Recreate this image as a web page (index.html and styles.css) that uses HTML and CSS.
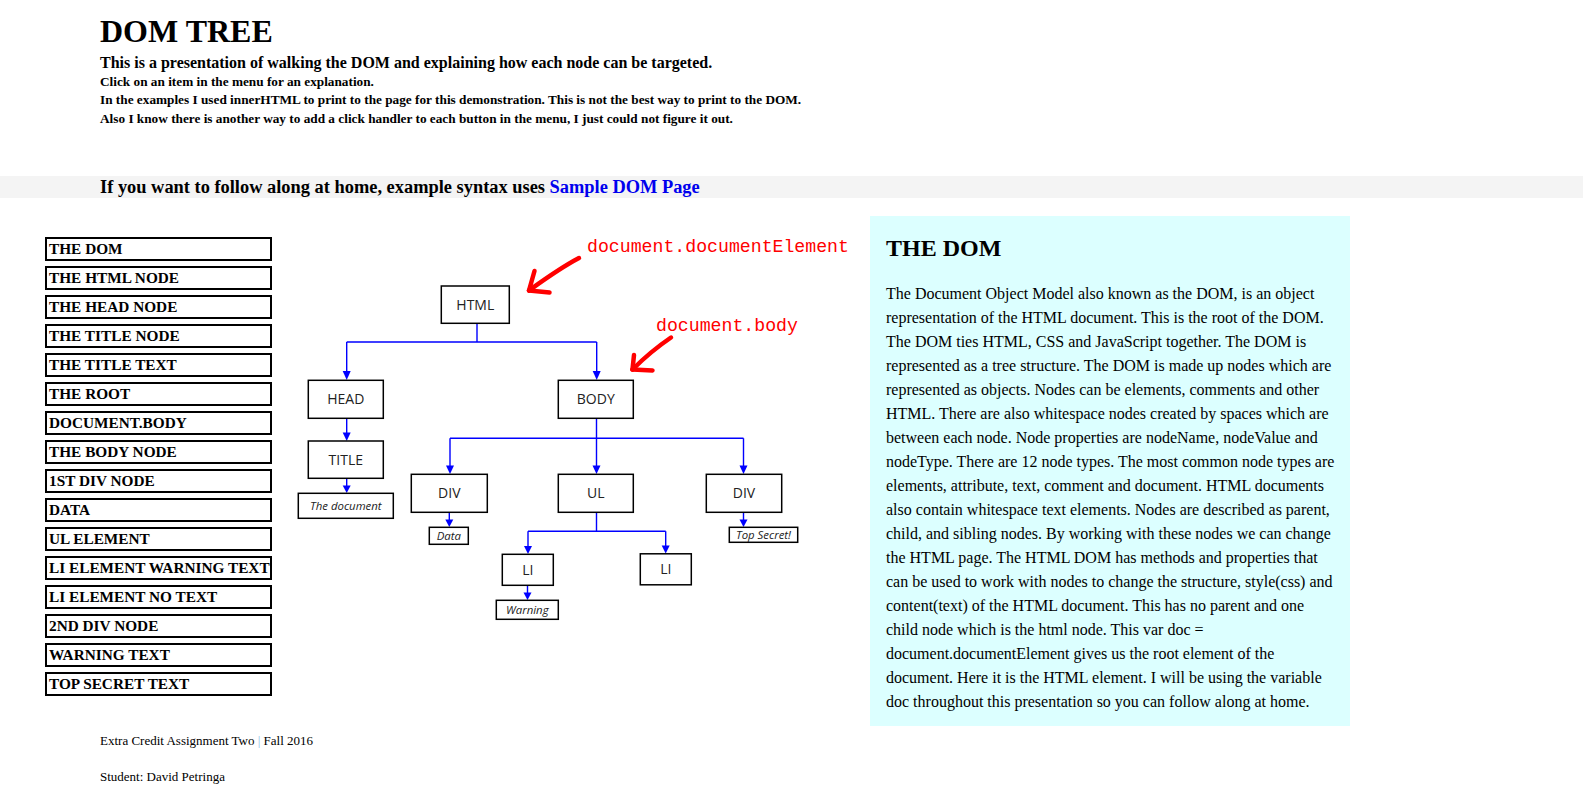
FILE: index.html
```html
<!DOCTYPE html>
<html lang="en">
<head>
<meta charset="utf-8">
<title>DOM Tree</title>
<link rel="stylesheet" href="styles.css">
</head>
<body>
<header class="intro">
  <h1 class="title">DOM TREE</h1>
  <p class="lead">This is a presentation of walking the DOM and explaining how each node can be targeted.</p>
  <p class="note">Click on an item in the menu for an explanation.</p>
  <p class="note">In the examples I used innerHTML to print to the page for this demonstration. This is not the best way to print to the DOM.</p>
  <p class="note">Also I know there is another way to add a click handler to each button in the menu, I just could not figure it out.</p>
</header>
<h3 class="follow">If you want to follow along at home, example syntax uses <a class="sample-link" href="#">Sample DOM Page</a></h3>
<main class="content">
  <nav class="menu">
    <button class="menu-item">THE DOM</button>
    <button class="menu-item">THE HTML NODE</button>
    <button class="menu-item">THE HEAD NODE</button>
    <button class="menu-item">THE TITLE NODE</button>
    <button class="menu-item">THE TITLE TEXT</button>
    <button class="menu-item">THE ROOT</button>
    <button class="menu-item">DOCUMENT.BODY</button>
    <button class="menu-item">THE BODY NODE</button>
    <button class="menu-item">1ST DIV NODE</button>
    <button class="menu-item">DATA</button>
    <button class="menu-item">UL ELEMENT</button>
    <button class="menu-item">LI ELEMENT WARNING TEXT</button>
    <button class="menu-item">LI ELEMENT NO TEXT</button>
    <button class="menu-item">2ND DIV NODE</button>
    <button class="menu-item">WARNING TEXT</button>
    <button class="menu-item">TOP SECRET TEXT</button>
  </nav>
  <svg class="diagram" width="580" height="420" viewBox="290 216 580 420" xmlns="http://www.w3.org/2000/svg">
    <defs>
      <filter id="soft" x="-20%" y="-20%" width="140%" height="140%">
        <feGaussianBlur stdDeviation="0.55"/>
      </filter>
    </defs>
    <g class="links" fill="none" stroke="#0000ff" stroke-width="1.4">
      <path d="M477 323 V342 M346.7 342 H596.7 M346.7 342 V372 M596.7 342 V372 M346.7 418 V433 M346.7 478.5 V486 M596.5 418 V466 M450 438.3 H743.5 M450 438.3 V466 M743.5 438.3 V466 M449.3 512 V520 M596.5 512 V531.3 M528 531.3 H665.7 M528 531.3 V547 M665.7 531.3 V546.5 M527.5 585 V593 M743.5 512 V520"/>
    </g>
    <g class="heads" fill="#0000ff">
      <polygon points="342.7,371 350.7,371 346.7,380"/>
      <polygon points="592.7,371 600.7,371 596.7,380"/>
      <polygon points="342.7,432.5 350.7,432.5 346.7,441"/>
      <polygon points="342.7,485.5 350.7,485.5 346.7,493"/>
      <polygon points="446,465.5 454,465.5 450,474"/>
      <polygon points="592.5,465.5 600.5,465.5 596.5,474"/>
      <polygon points="739.5,465.5 747.5,465.5 743.5,474"/>
      <polygon points="445.3,519.5 453.3,519.5 449.3,527"/>
      <polygon points="524,546 532,546 528,554"/>
      <polygon points="661.7,545.5 669.7,545.5 665.7,553.5"/>
      <polygon points="523.5,592.5 531.5,592.5 527.5,600"/>
      <polygon points="739.5,519.5 747.5,519.5 743.5,527"/>
    </g>
    <g class="nodes" fill="#fff" stroke="#000" stroke-width="1.5">
      <rect x="441.3" y="286" width="68" height="37.3"/>
      <rect x="308.3" y="380.3" width="75" height="38"/>
      <rect x="558.3" y="380.3" width="75" height="38"/>
      <rect x="308.3" y="441" width="75" height="37.3"/>
      <rect x="298.3" y="493.3" width="95" height="25"/>
      <rect x="411.3" y="474.3" width="76" height="38"/>
      <rect x="558.3" y="474.3" width="75" height="38"/>
      <rect x="706.3" y="474.3" width="75.4" height="38"/>
      <rect x="429.3" y="527.3" width="39" height="17"/>
      <rect x="729.3" y="527.3" width="68.4" height="15"/>
      <rect x="502.3" y="554.3" width="51" height="31"/>
      <rect x="640.3" y="553.8" width="51" height="31"/>
      <rect x="496.3" y="600.3" width="62" height="19"/>
    </g>
    <g class="labels" font-family="'Open Sans', 'Noto Sans', sans-serif" font-size="14" fill="#222" text-anchor="middle">
      <text x="475.3" y="310">HTML</text>
      <text x="345.8" y="404">HEAD</text>
      <text x="595.8" y="404">BODY</text>
      <text x="345.8" y="464.5">TITLE</text>
      <text x="449.3" y="498">DIV</text>
      <text x="595.8" y="498">UL</text>
      <text x="744" y="498">DIV</text>
      <text x="527.8" y="574.5">LI</text>
      <text x="665.8" y="574">LI</text>
    </g>
    <g class="small-labels" font-family="'Open Sans', 'Noto Sans', sans-serif" font-size="11.4" font-style="italic" fill="#222" text-anchor="middle">
      <text x="345.8" y="509.8">The document</text>
      <text x="448.8" y="539.8">Data</text>
      <text x="763.5" y="538.8">Top Secret!</text>
      <text x="527.3" y="614.3">Warning</text>
    </g>
    <g class="pointers" fill="none" stroke="#ff0000" stroke-width="4.5" stroke-linecap="round" stroke-linejoin="round" filter="url(#soft)">
      <path d="M579 258 C560 268 545 279 529 290.5"/>
      <path d="M529 290.5 L534.5 271"/>
      <path d="M529 290.5 L549.5 292.5"/>
      <path d="M671 337.5 C657 347 645 357 632.5 369.5"/>
      <path d="M632.5 369.5 L634 355"/>
      <path d="M632.5 369.5 L652.5 370.5"/>
    </g>
    <g class="code-notes" font-family="'Liberation Mono', 'Courier New', monospace" font-size="18.2" fill="#ff0000">
      <text x="587" y="252">document.documentElement</text>
      <text x="656" y="331">document.body</text>
    </g>
  </svg>
  <section class="info">
    <h2 class="info-title">THE DOM</h2>
    <p class="info-text">The Document Object Model also known as the DOM, is an object representation of the HTML document. This is the root of the DOM. The DOM ties HTML, CSS and JavaScript together. The DOM is represented as a tree structure. The DOM is made up nodes which are represented as objects. Nodes can be elements, comments and other HTML. There are also whitespace nodes created by spaces which are between each node. Node properties are nodeName, nodeValue and nodeType. There are 12 node types. The most common node types are elements, attribute, text, comment and document. HTML documents also contain whitespace text elements. Nodes are described as parent, child, and sibling nodes. By working with these nodes we can change the HTML page. The HTML DOM has methods and properties that can be used to work with nodes to change the structure, style(css) and content(text) of the HTML document. This has no parent and one child node which is the html node. This var doc = document.documentElement gives us the root element of the document. Here it is the HTML element. I will be using the variable doc throughout this presentation so you can follow along at home.</p>
  </section>
</main>
<footer class="foot">
  <p class="foot-line">Extra Credit Assignment Two <span class="sep">|</span> Fall 2016</p>
  <p class="foot-line student">Student: David Petringa</p>
</footer>
</body>
</html>
```

FILE: styles.css
```css
html, body {
  margin: 0;
  padding: 0;
  background: #ffffff;
}

body {
  font-family: "Liberation Serif", "Times New Roman", serif;
  color: #000;
  width: 1583px;
}

.intro {
  padding-left: 100px;
}

.title {
  margin: 13px 0 0;
  font-size: 32px;
  line-height: 37px;
  font-weight: bold;
}

.lead {
  margin: 3px 0 0;
  font-size: 16px;
  line-height: 20px;
  font-weight: bold;
}

.note {
  margin: 0;
  font-size: 13.28px;
  line-height: 18.35px;
  font-weight: bold;
}

.follow {
  margin: 48px 0 0;
  padding-left: 100px;
  background: #f4f4f4;
  font-size: 18.4px;
  line-height: 22px;
  font-weight: bold;
}

.sample-link {
  color: #0000ee;
  text-decoration: none;
}

.content {
  display: flex;
  align-items: flex-start;
  padding: 18px 0 0 45px;
}

.menu {
  display: flex;
  flex-direction: column;
  gap: 5px;
  width: 227px;
  margin-top: 21.3px;
}

.menu-item {
  display: block;
  box-sizing: border-box;
  width: 227px;
  height: 24px;
  margin: 0;
  padding: 0 2px;
  border: 2px solid #000;
  background: #fff;
  font-family: "Liberation Serif", "Times New Roman", serif;
  font-size: 15.3px;
  line-height: 20px;
  font-weight: bold;
  color: #000;
  text-align: left;
  white-space: nowrap;
  cursor: pointer;
}

.diagram {
  display: block;
  flex: none;
  margin-left: 18px;
}

.info {
  flex: none;
  box-sizing: border-box;
  width: 480px;
  padding: 18px 10px 12px 16px;
  background: #dcffff;
}

.info-title {
  margin: 0 0 20px;
  font-size: 24px;
  line-height: 28px;
  font-weight: bold;
}

.info-text {
  margin: 0;
  font-size: 16px;
  line-height: 24px;
}

.foot {
  padding-left: 100px;
}

.foot-line {
  margin: 6.5px 0 0;
  font-size: 13px;
  line-height: 15px;
}

.foot-line.student {
  margin-top: 21.7px;
}

.sep {
  color: #8ab8e6;
}
```
